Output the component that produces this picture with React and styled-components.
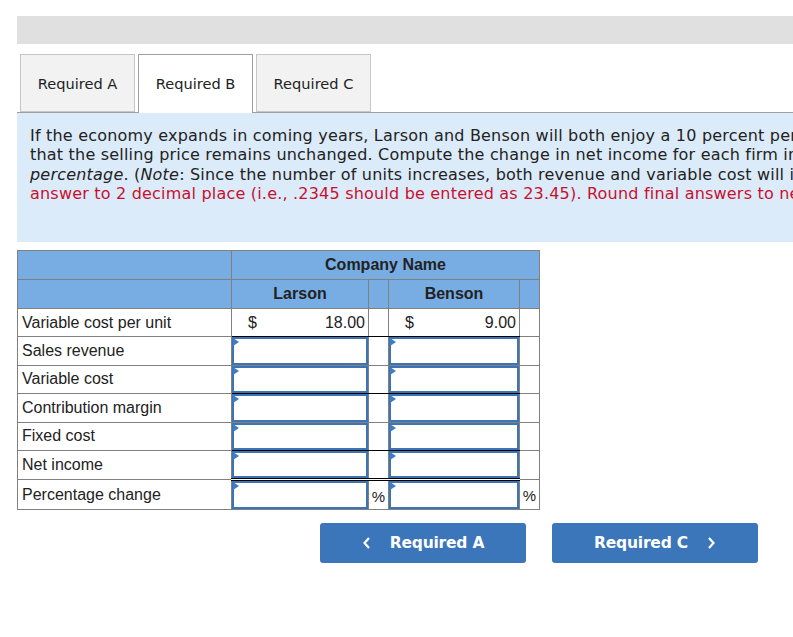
import React from "react";
import styled, { createGlobalStyle } from "styled-components";

const Global = createGlobalStyle`
  html, body { margin: 0; padding: 0; background: #fff; overflow: hidden; }
  body { font-family: "DejaVu Sans", Verdana, sans-serif; color: #222; }
`;

const Page = styled.div`
  width: 1000px;
  padding: 16px 0 0 17px;
`;

const TopBar = styled.div`
  height: 28px;
  background: #e0e0e0;
`;

const Tabs = styled.div`
  display: flex;
  gap: 3px;
  margin-top: 10px;
  padding-left: 3px;
  border-bottom: 1px solid #a0a0a0;
  height: 58px;
  align-items: flex-end;
`;

const Tab = styled.div`
  box-sizing: border-box;
  width: 115px;
  height: ${(p) => (p.$active ? "59px" : "58px")};
  margin-bottom: ${(p) => (p.$active ? "-1px" : "0")};
  background: ${(p) => (p.$active ? "#fff" : "#f2f2f2")};
  border: 1px solid ${(p) => (p.$active ? "#a0a0a0" : "#c6c6c6")};
  border-bottom: ${(p) => (p.$active ? "none" : "1px solid #c6c6c6")};
  display: flex;
  align-items: center;
  justify-content: center;
  font-size: 14.6px;
  color: #222;
  padding-bottom: ${(p) => (p.$active ? "1px" : "0")};
  padding-top: ${(p) => (p.$active ? "0" : "1px")};
`;

const Panel = styled.div`
  background: #dcebf9;
  height: 129px;
  box-sizing: border-box;
  padding: 13px 0 0 13px;
  font-size: 16px;
  letter-spacing: 0.2px;
  line-height: 19.4px;
  color: #222;
`;

const Line = styled.div`
  white-space: nowrap;
  color: ${(p) => (p.$red ? "#c8102e" : "#222")};
`;

const Table = styled.table`
  margin-top: 8px;
  border-collapse: collapse;
  font-family: "Liberation Sans", Arial, sans-serif;
  font-size: 16px;
  table-layout: fixed;
  width: 523px;
`;

const HeadCell = styled.th`
  background: #78ade3;
  border: 1px solid #808080;
  height: 28px;
  padding: 0;
  font-weight: bold;
  color: #222;
  text-align: center;
`;

const Label = styled.td`
  border: 1px solid #808080;
  height: 27.4px;
  padding: 0 0 0 4px;
  color: #222;
`;

const Cell = styled.td`
  border: 1px solid #808080;
  border-bottom: ${(p) =>
    p.$rule === "single"
      ? "1px solid #000"
      : p.$rule === "double"
      ? "3px double #000"
      : "1px solid #808080"};
  height: 27.4px;
  padding: 0;
  position: relative;
  color: #222;
`;

const Amount = styled.div`
  display: flex;
  justify-content: space-between;
  padding: 0 3px 0 16px;
`;

const InputBox = styled.div`
  position: absolute;
  left: 0;
  right: 0;
  top: 0;
  bottom: 0;
  border: 2px solid #3d74b5;
  background: #fff;
  &::before {
    content: "";
    position: absolute;
    left: -1px;
    top: -1px;
    border-top: 4px solid transparent;
    border-bottom: 4px solid transparent;
    border-left: 6px solid #3d7cc9;
  }
`;

const Pct = styled.div`
  text-align: center;
  font-size: 15px;
  padding-top: 2px;
`;

const ButtonRow = styled.div`
  display: flex;
  gap: 26px;
  margin-top: 13px;
  padding-left: 303px;
`;

const NavButton = styled.div`
  width: 206px;
  height: 40px;
  background: #3a76b9;
  border-radius: 3px;
  color: #fff;
  font-weight: bold;
  font-size: 15.5px;
  letter-spacing: -0.2px;
  display: flex;
  align-items: center;
  justify-content: center;
  gap: 18px;
`;

const Chevron = ({ dir }) => (
  <svg width="10" height="14" viewBox="0 0 10 14">
    <path
      d={dir === "left" ? "M7 2 L2.5 7 L7 12" : "M3 2 L7.5 7 L3 12"}
      fill="none"
      stroke="#fff"
      strokeWidth="2.2"
    />
  </svg>
);

const rows = [
  { label: "Sales revenue", rule: "none" },
  { label: "Variable cost", rule: "single" },
  { label: "Contribution margin", rule: "none" },
  { label: "Fixed cost", rule: "single" },
  { label: "Net income", rule: "double" },
];

export default function App() {
  return (
    <>
      <Global />
      <Page>
        <TopBar />
        <Tabs>
          <Tab>Required A</Tab>
          <Tab $active>Required B</Tab>
          <Tab>Required C</Tab>
        </Tabs>
        <Panel>
          <Line>
            If the economy expands in coming years, Larson and Benson will both enjoy a 10 percent per year increase in the volume
          </Line>
          <Line>
            that the selling price remains unchanged. Compute the change in net income for each firm in dollar amount and in
          </Line>
          <Line>
            <i>percentage</i>. (<i>Note</i>: Since the number of units increases, both revenue and variable cost will increase.)
          </Line>
          <Line $red>
            answer to 2 decimal place (i.e., .2345 should be entered as 23.45). Round final answers to nearest whole dollar.)
          </Line>
        </Panel>
        <Table>
          <colgroup>
            <col style={{ width: 214 }} />
            <col style={{ width: 137 }} />
            <col style={{ width: 20 }} />
            <col style={{ width: 131 }} />
            <col style={{ width: 20 }} />
          </colgroup>
          <thead>
            <tr>
              <HeadCell />
              <HeadCell colSpan={4}>Company Name</HeadCell>
            </tr>
            <tr>
              <HeadCell />
              <HeadCell>Larson</HeadCell>
              <HeadCell />
              <HeadCell>Benson</HeadCell>
              <HeadCell />
            </tr>
          </thead>
          <tbody>
            <tr>
              <Label>Variable cost per unit</Label>
              <Cell $rule="single">
                <Amount>
                  <span>$</span>
                  <span>18.00</span>
                </Amount>
              </Cell>
              <Cell $rule="single" />
              <Cell $rule="single">
                <Amount>
                  <span>$</span>
                  <span>9.00</span>
                </Amount>
              </Cell>
              <Cell />
            </tr>
            {rows.map((r) => (
              <tr key={r.label}>
                <Label>{r.label}</Label>
                <Cell $rule={r.rule}>
                  <InputBox />
                </Cell>
                <Cell $rule={r.rule} />
                <Cell $rule={r.rule}>
                  <InputBox />
                </Cell>
                <Cell />
              </tr>
            ))}
            <tr>
              <Label>Percentage change</Label>
              <Cell>
                <InputBox />
              </Cell>
              <Cell>
                <Pct>%</Pct>
              </Cell>
              <Cell>
                <InputBox />
              </Cell>
              <Cell>
                <Pct>%</Pct>
              </Cell>
            </tr>
          </tbody>
        </Table>
        <ButtonRow>
          <NavButton>
            <Chevron dir="left" />
            Required A
          </NavButton>
          <NavButton>
            Required C
            <Chevron dir="right" />
          </NavButton>
        </ButtonRow>
      </Page>
    </>
  );
}
